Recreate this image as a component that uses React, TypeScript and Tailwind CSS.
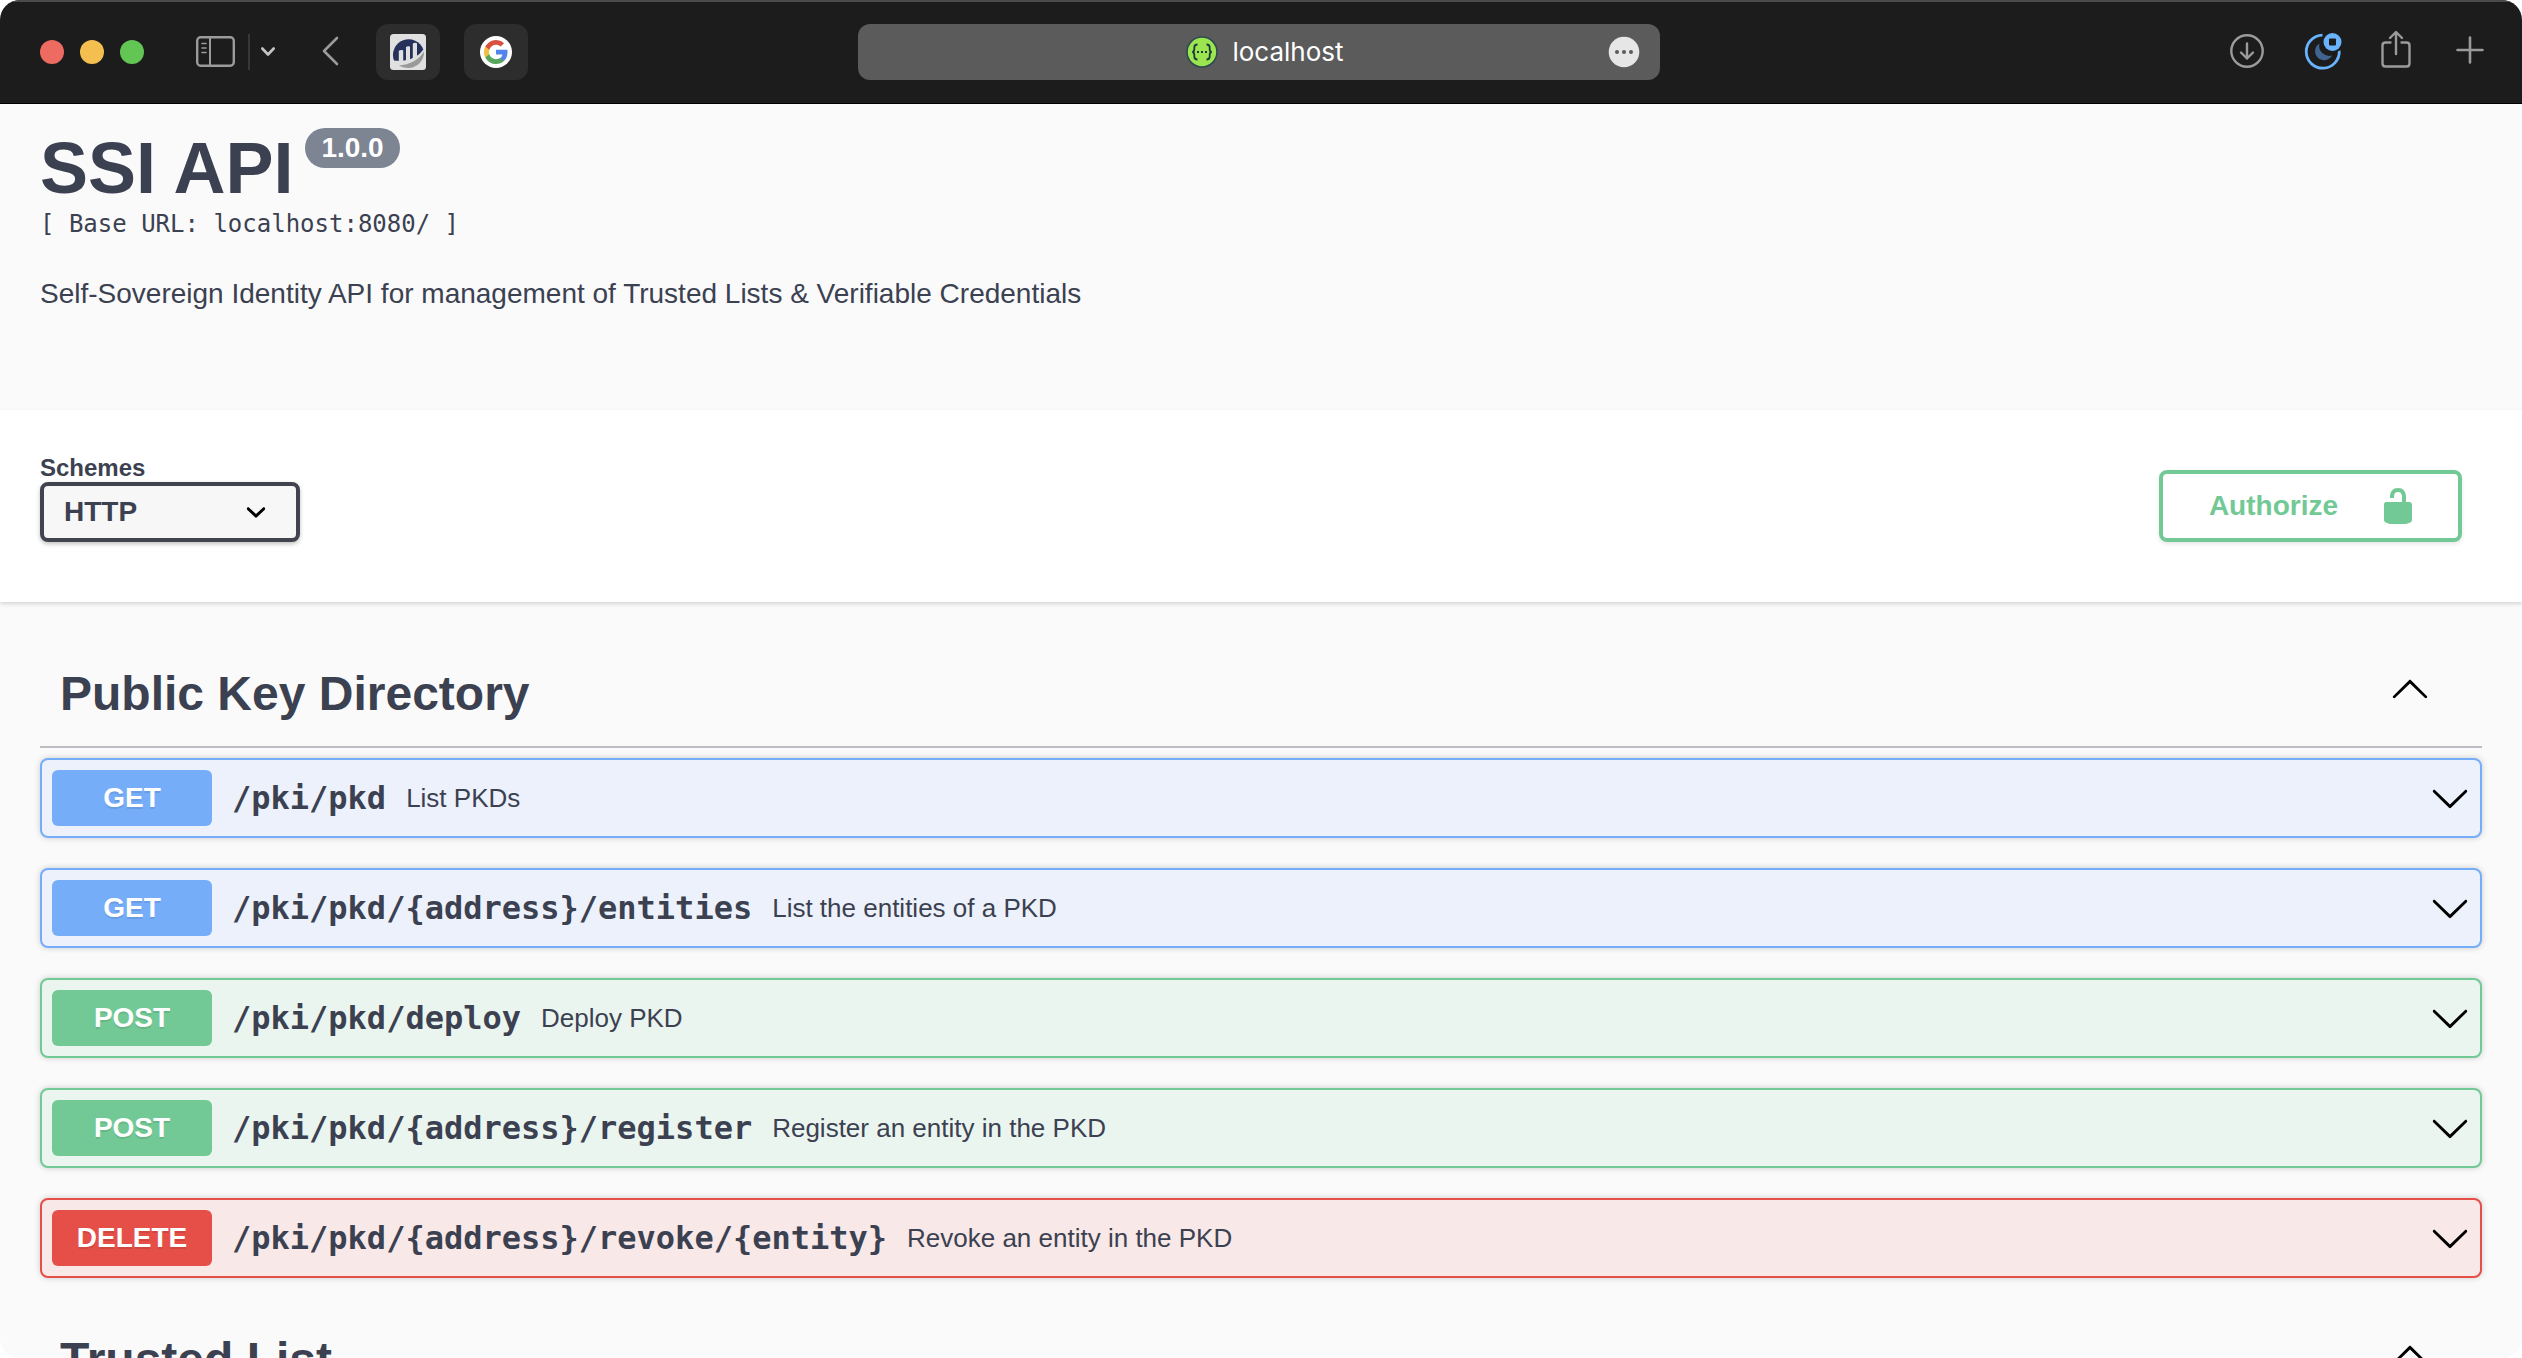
import React from "react";

type Method = "GET" | "POST" | "DELETE";

interface Operation {
  method: Method;
  path: string;
  summary: string;
}

const operations: Operation[] = [
  { method: "GET", path: "/pki/pkd", summary: "List PKDs" },
  { method: "GET", path: "/pki/pkd/{address}/entities", summary: "List the entities of a PKD" },
  { method: "POST", path: "/pki/pkd/deploy", summary: "Deploy PKD" },
  { method: "POST", path: "/pki/pkd/{address}/register", summary: "Register an entity in the PKD" },
  { method: "DELETE", path: "/pki/pkd/{address}/revoke/{entity}", summary: "Revoke an entity in the PKD" },
];

const rowStyles: Record<Method, string> = {
  GET: "border-[#76adf9] bg-[#ecf1fb]",
  POST: "border-[#72c995] bg-[#ebf5ef]",
  DELETE: "border-[#e54f47] bg-[#f8e8e7]",
};

const badgeStyles: Record<Method, string> = {
  GET: "bg-[#76adf9]",
  POST: "bg-[#72c995]",
  DELETE: "bg-[#e54f47]",
};

function ArrowDown() {
  return (
    <svg viewBox="0 0 20 20" className="size-10 shrink-0 fill-black" aria-hidden="true">
      <path d="M17.418 6.109c.272-.268.709-.268.979 0s.271.701 0 .969l-7.908 7.83c-.27.268-.707.268-.979 0l-7.908-7.83c-.27-.268-.27-.701 0-.969.271-.268.709-.268.979 0L10 13.25z" />
    </svg>
  );
}

function ArrowUp() {
  return (
    <svg viewBox="0 0 20 20" className="size-10 shrink-0 fill-black" aria-hidden="true">
      <path d="M17.418 14.908c.272.268.709.268.979 0s.271-.701 0-.969l-7.908-7.83c-.27-.268-.707-.268-.979 0l-7.908 7.83c-.27.268-.27.701 0 .969.271.268.709.268.979 0L10 7.767z" />
    </svg>
  );
}

function SidebarIcon() {
  return (
    <svg viewBox="0 0 40 32" className="h-8 w-10" fill="none" stroke="#9b9b9b" strokeWidth="2.4" strokeLinecap="round" aria-hidden="true">
      <rect x="1.2" y="1.2" width="36.6" height="28.6" rx="3.5" />
      <path d="M14 1.5v28" strokeWidth="2" />
      <path d="M6 7.5h4M6 12h4M6 16.5h4" strokeWidth="1.6" />
    </svg>
  );
}

function ChartSiteIcon() {
  return (
    <svg viewBox="0 0 36 36" className="size-9" aria-hidden="true">
      <rect width="36" height="36" rx="3.5" fill="#e0e0e0" />
      <path d="M4 26.500A15.500 15.500 0 1 1 33.300 15.500C29 22 21 26 10 27Z" fill="#25315a" />
      <path d="M8.800 28V16.800Q11 15.300 13.200 16.300V28ZM16 27V13Q18 11.600 20 12.600V26ZM22.800 25V9.500Q25 8 27 9.200V23Z" fill="#e0e0e0" />
      <path d="M9 31.500C19 30.800 29 26 34 17.500C34.500 26 27.500 34 18.500 34C14.500 34 11.500 33 9 31.500Z" fill="#9a9a9a" />
    </svg>
  );
}

function GoogleIcon() {
  return (
    <svg viewBox="0 0 32 32" className="size-8" aria-hidden="true">
      <circle cx="16" cy="16" r="16" fill="#fff" />
      <g transform="translate(4 4)">
        <path fill="#5383ec" d="M23.500 12.270c0-.850-.080-1.670-.220-2.450H12v4.640h6.450a5.520 5.520 0 0 1-2.390 3.620v3.010h3.870c2.260-2.090 3.570-5.160 3.570-8.820z" />
        <path fill="#58a65c" d="M12 24c3.240 0 5.950-1.080 7.930-2.910l-3.870-3.010c-1.070.720-2.450 1.140-4.060 1.140-3.130 0-5.780-2.110-6.720-4.950H1.280v3.110A12 12 0 0 0 12 24z" />
        <path fill="#f1bf42" d="M5.280 14.270a7.200 7.200 0 0 1 0-4.540V6.620H1.280a12 12 0 0 0 0 10.760z" />
        <path fill="#d85140" d="M12 4.780c1.760 0 3.350.610 4.590 1.800l3.440-3.440A12 12 0 0 0 1.280 6.620l4 3.110C6.220 6.890 8.870 4.780 12 4.780z" />
      </g>
    </svg>
  );
}

function SwaggerIcon() {
  return (
    <svg viewBox="0 0 32 32" className="size-8" fill="none" stroke="#1d3a3b" aria-hidden="true">
      <circle cx="16" cy="16" r="15" fill="#9be551" stroke="#2d4a4e" strokeWidth="1.6" />
      <path d="M11.500 8.500c-2.500 0-3.200.8-3.200 3v1.700c0 1.800-.6 2.600-2 2.800 1.400.2 2 1 2 2.800v1.700c0 2.200.7 3 3.200 3M20.500 8.500c2.500 0 3.200.8 3.200 3v1.700c0 1.800.6 2.600 2 2.800-1.400.2-2 1-2 2.800v1.700c0 2.200-.7 3-3.200 3" strokeWidth="1.800" />
      <path d="M11 16h2M15 16h2M19 16h2" strokeWidth="2" />
    </svg>
  );
}

function BrowserBar() {
  const iconButton = "flex cursor-pointer items-center justify-center";
  return (
    <header className="grid h-26 shrink-0 grid-cols-[1fr_802px_1fr] items-center bg-[#1c1c1c] pr-9 pl-8 shadow-[inset_0_2px_0_#4a4a4a,inset_0_-1px_0_#000]">
      <div className="flex items-center pl-2">
        <div className="flex gap-4">
          <button aria-label="Close" className="size-6 rounded-full bg-[#ed6b60]" />
          <button aria-label="Minimize" className="size-6 rounded-full bg-[#f5bf4f]" />
          <button aria-label="Zoom" className="size-6 rounded-full bg-[#62c554]" />
        </div>
        <button aria-label="Sidebar" className={`${iconButton} ml-13`}>
          <SidebarIcon />
        </button>
        <div className="ml-3 h-9 w-0.5 bg-[#373737]" />
        <button aria-label="Tab groups" className={`${iconButton} ml-2.5`}>
          <svg viewBox="0 0 16 12" className="h-3 w-4" fill="none" stroke="#c4c4c4" strokeWidth="2.6" strokeLinecap="round" strokeLinejoin="round" aria-hidden="true">
            <path d="M2.300 2.500L8 8.500l5.700-6" />
          </svg>
        </button>
        <button aria-label="Back" className={`${iconButton} ml-11`}>
          <svg viewBox="0 0 20 32" className="h-8 w-5" fill="none" stroke="#9b9b9b" strokeWidth="2.600" strokeLinecap="round" strokeLinejoin="round" aria-hidden="true">
            <path d="M17 2L4 15l13 13" />
          </svg>
        </button>
        <button aria-label="Pinned site" className={`${iconButton} ml-9 h-14 w-16 rounded-xl bg-[#2d2d2d]`}>
          <ChartSiteIcon />
        </button>
        <button aria-label="Google" className={`${iconButton} ml-6 h-14 w-16 rounded-xl bg-[#2d2d2d]`}>
          <GoogleIcon />
        </button>
      </div>

      <div className="grid h-14 grid-cols-[1fr_auto_1fr] items-center rounded-xl bg-[#5b5b5b] pr-5 pl-8">
        <span />
        <div className="flex items-center gap-3.5">
          <SwaggerIcon />
          <span className="font-['Inter',sans-serif] text-[26px] leading-8 text-white">localhost</span>
        </div>
        <button aria-label="Page menu" className={`${iconButton} justify-self-end`}>
          <svg viewBox="0 0 32 32" className="size-8" aria-hidden="true">
            <circle cx="16" cy="16" r="15.300" fill="#e6e6e6" />
            <circle cx="9" cy="16" r="2" fill="#5b5b5b" />
            <circle cx="16" cy="16" r="2" fill="#5b5b5b" />
            <circle cx="23" cy="16" r="2" fill="#5b5b5b" />
          </svg>
        </button>
      </div>

      <div className="flex items-center justify-end gap-9 pb-1">
        <button aria-label="Downloads" className={iconButton}>
          <svg viewBox="0 0 40 40" className="size-10" fill="none" stroke="#9b9b9b" strokeWidth="2.400" strokeLinecap="round" strokeLinejoin="round" aria-hidden="true">
            <circle cx="21" cy="21" r="15.700" />
            <path d="M21 13.500v15M15 22.500l6 6 6-6" />
          </svg>
        </button>
        <button aria-label="Appearance extension" className={iconButton}>
          <svg viewBox="0 0 40 40" className="size-10" fill="none" aria-hidden="true">
            <path d="M20.500 5.200A16.500 16.500 0 1 0 37.200 20.500" stroke="#68b3fb" strokeWidth="2.800" />
            <path d="M17.500 13.500A9 9 0 1 0 30 25.500A10 10 0 0 1 17.500 13.500Z" fill="#41638f" />
            <circle cx="30.500" cy="12" r="10.800" fill="#1c1c1c" />
            <circle cx="30.500" cy="12" r="9" fill="#68b3fb" />
            <rect x="27" y="8.500" width="7" height="7" rx="1" fill="#1c1c1c" />
          </svg>
        </button>
        <button aria-label="Share" className={iconButton}>
          <svg viewBox="0 0 36 40" className="h-10 w-9" fill="none" stroke="#9b9b9b" strokeWidth="2.400" strokeLinecap="round" strokeLinejoin="round" aria-hidden="true">
            <path d="M12.500 12.500H7.500Q4.500 12.500 4.500 15.500V33.500Q4.500 36.500 7.500 36.500H28.500Q31.500 36.500 31.500 33.500V15.500Q31.500 12.500 28.500 12.500H23.500M18 24V2.500M12 8l6-6 6 6" />
          </svg>
        </button>
        <button aria-label="New tab" className={`${iconButton} ml-1`}>
          <svg viewBox="0 0 32 32" className="size-8" fill="none" stroke="#9b9b9b" strokeWidth="2.600" strokeLinecap="round" aria-hidden="true">
            <path d="M16 3.500v25M3.500 16h25" />
          </svg>
        </button>
      </div>
    </header>
  );
}

function OperationRow({ method, path, summary }: Operation) {
  return (
    <button
      className={`flex h-20 w-full cursor-pointer items-center rounded-lg border-2 px-2.5 text-left shadow-[0_0_6px_rgba(0,0,0,0.19)] ${rowStyles[method]}`}
    >
      <span
        className={`w-40 rounded-md text-center text-[28px] leading-14 font-bold text-white [text-shadow:0_2px_0_rgba(0,0,0,0.1)] ${badgeStyles[method]}`}
      >
        {method}
      </span>
      <span className="px-5 font-['DejaVu_Sans_Mono',monospace] text-[32px] leading-10 font-bold">{path}</span>
      <span className="flex-1 text-[26px] leading-8">{summary}</span>
      <ArrowDown />
    </button>
  );
}

function TagHeading({ title }: { title: string }) {
  return (
    <div className="flex items-start justify-between border-b-2 border-[#bdbec4] py-6 pr-13 pl-5">
      <h2 className="text-[48px] leading-14 font-bold">{title}</h2>
      <button aria-label={`Collapse ${title}`} className="cursor-pointer pt-0.5">
        <ArrowUp />
      </button>
    </div>
  );
}

export default function App() {
  return (
    <div className="h-screen bg-white">
      <div className="flex h-full flex-col overflow-hidden rounded-[20px] bg-[#fafafa] font-['Liberation_Sans',Arial,sans-serif] text-[#3b4151]">
        <BrowserBar />
        <main className="min-h-0 flex-1 overflow-hidden">
          <section className="px-10 pt-6 pb-[98px]">
            <div className="flex items-start gap-3">
              <h1 className="text-[72px] leading-20 font-bold">SSI API</h1>
              <span className="rounded-full bg-[#7d8492] px-4 text-[28px] leading-10 font-bold text-white">1.0.0</span>
            </div>
            <p className="font-['DejaVu_Sans_Mono',monospace] text-2xl leading-8">[ Base URL: localhost:8080/ ]</p>
            <p className="pt-9 text-[28px] leading-9">
              Self-Sovereign Identity API for management of Trusted Lists &amp; Verifiable Credentials
            </p>
          </section>

          <section className="flex items-end justify-between bg-white px-10 pt-11 pr-15 pb-15 shadow-[0_2px_4px_rgba(0,0,0,0.15)]">
            <div className="flex flex-col">
              <label htmlFor="schemes" className="text-2xl leading-7 font-bold">
                Schemes
              </label>
              <div className="grid w-65 items-center">
                <select
                  id="schemes"
                  className="col-start-1 row-start-1 h-15 appearance-none rounded-lg border-4 border-[#41444e] bg-[#f7f7f7] px-5 text-[28px] leading-9 font-bold shadow-[0_2px_4px_rgba(0,0,0,0.25)]"
                >
                  <option>HTTP</option>
                </select>
                <svg viewBox="0 0 20 20" className="pointer-events-none col-start-1 row-start-1 mr-6 size-10 justify-self-end fill-black" aria-hidden="true">
                  <path d="M13.418 7.859c.271-.268.709-.268.978 0 .270.268.272.701 0 .969l-3.908 3.830c-.270.268-.707.268-.979 0l-3.908-3.830c-.270-.267-.270-.701 0-.969.271-.268.709-.268.978 0L10 11l3.418-3.141z" />
                </svg>
              </div>
            </div>
            <button className="flex h-18 cursor-pointer items-center gap-10 rounded-lg border-4 border-[#72c995] pr-10 pl-11.5 text-[28px] font-bold text-[#72c995] shadow-[0_2px_4px_rgba(0,0,0,0.1)]">
              Authorize
              <svg viewBox="0 0 20 20" className="size-10 fill-[#72c995]" aria-hidden="true">
                <path d="M15.800 8H14V5.600C14 2.703 12.665 1 10 1 7.334 1 6 2.703 6 5.600V6h2v-.801C8 3.754 8.797 3 10 3c1.203 0 2 .754 2 2.199V8H4c-.553 0-1 .646-1 1.199V17c0 .549.428 1.139.951 1.307l1.197.387C5.672 18.861 6.550 19 7.100 19h5.800c.549 0 1.428-.139 1.951-.307l1.196-.387c.524-.167.953-.757.953-1.306V9.199C17 8.646 16.352 8 15.800 8z" />
              </svg>
            </button>
          </section>

          <div className="flex flex-col gap-7.5 px-10 pt-10">
            <section>
              <TagHeading title="Public Key Directory" />
              <ul className="flex flex-col gap-7.5 pt-2.5">
                {operations.map((operation) => (
                  <li key={operation.path}>
                    <OperationRow {...operation} />
                  </li>
                ))}
              </ul>
            </section>
            <section>
              <TagHeading title="Trusted List" />
            </section>
          </div>
        </main>
      </div>
    </div>
  );
}
